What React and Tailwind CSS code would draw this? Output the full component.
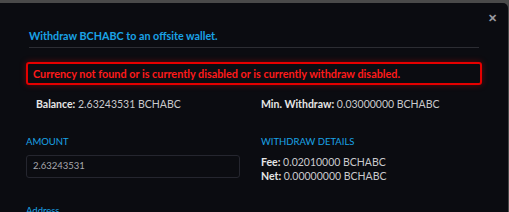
export default function App() {
  return (
    <div className="h-[212px] w-[509px] overflow-hidden bg-[#4a4a4a] pt-[3px] font-['Lato',sans-serif]">
      <div className="relative h-[220px] w-[508px] rounded-tr-[5px] bg-[#0b0c11] px-[26px]">
        <button className="absolute right-[11px] top-[9px] text-[11px] font-bold leading-none text-[#9a9aa0]">
          ✕
        </button>

        <div className="pt-[25px]">
          <h4 className="mx-[3px] border-b border-[#2c2d33] pb-[3px] text-[10.75px] font-bold leading-[16px] text-[#1aa3e6]">
            Withdraw BCHABC to an offsite wallet.
          </h4>
        </div>

        <div className="mt-[14px] rounded-[3px] border-2 border-[#e60000] px-[5px] py-[2px] shadow-[0_0_6px_rgba(255,0,0,0.35)]">
          <p className="text-[10.85px] font-bold leading-[15px] text-[#ff1a1a]">
            Currency not found or is currently disabled or is currently withdraw disabled.
          </p>
        </div>

        <div className="mt-[12px] grid grid-cols-2 text-[10.5px] leading-[14px] text-[#c9c9cc]">
          <div className="pl-[10px]">
            <span className="font-bold text-[#e6e6e6]">Balance:</span> 2.63243531 BCHABC
          </div>
          <div className="pl-[7px]">
            <span className="font-bold text-[#e6e6e6]">Min. Withdraw:</span> 0.03000000 BCHABC
          </div>
        </div>

        <div className="mt-[24px] grid grid-cols-2">
          <div>
            <label className="block text-[9.5px] leading-[14px] text-[#1aa3e6]">AMOUNT</label>
            <div className="mt-[6px] flex h-[23px] w-[214px] items-center rounded-[3px] border border-[#25262f] bg-[#0b0c11] px-[6px] text-[9.5px] text-[#a8a8ae]">
              2.63243531
            </div>
            <label className="mt-[26px] block text-[9.5px] leading-[14px] text-[#1aa3e6]">Address</label>
          </div>
          <div className="pl-[7px]">
            <div className="text-[9.5px] leading-[14px] text-[#1aa3e6]">WITHDRAW DETAILS</div>
            <div className="mt-[6px] text-[10.5px] leading-[14px] text-[#c9c9cc]">
              <div>
                <span className="font-bold text-[#e6e6e6]">Fee:</span> 0.02010000 BCHABC
              </div>
              <div>
                <span className="font-bold text-[#e6e6e6]">Net:</span> 0.00000000 BCHABC
              </div>
            </div>
          </div>
        </div>
      </div>
    </div>
  );
}
